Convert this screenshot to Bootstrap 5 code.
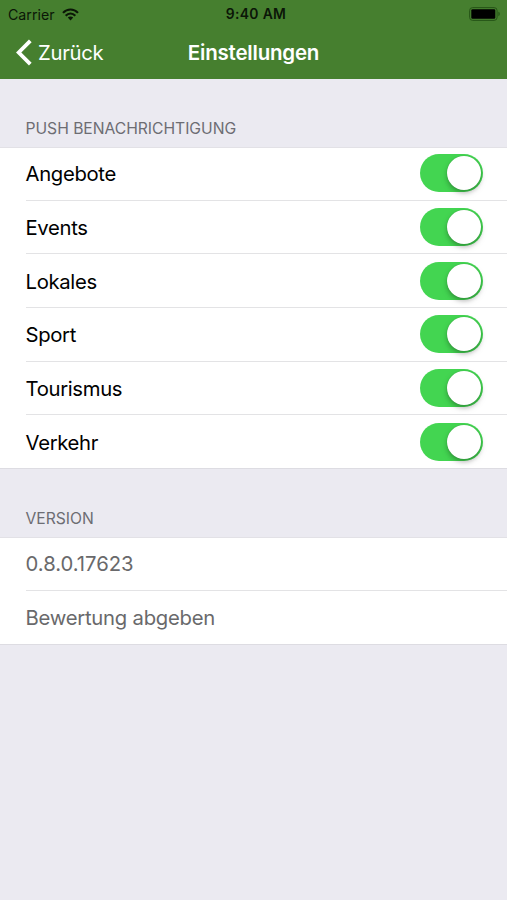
<!DOCTYPE html>
<html lang="de">
<head>
<meta charset="utf-8">
<meta name="viewport" content="width=device-width, initial-scale=1">
<title>Einstellungen</title>
<link href="https://cdn.jsdelivr.net/npm/bootstrap@5.3.0/dist/css/bootstrap.min.css" rel="stylesheet">
<style>
  body { font-family: Inter, "Liberation Sans", sans-serif; background: #ebeaf1; min-height: 100vh; }
  .app-header { background: #467f2f; height: 79px; }
  .status-bar { display: grid; grid-template-columns: 1fr auto 1fr; height: 27px; padding: 0 6px 0 8px; font-size: 14.2px; line-height: 27px; color: #0b1607; }
  .status-left { gap: 7px; }
  .status-time { font-weight: 600; font-size: 13.9px; letter-spacing: .35px; padding: 1px 0 0 3px; }
  .title-bar { display: grid; grid-template-columns: 1fr auto 1fr; height: 52px; padding: 0 15px; color: #fff; }
  .title-bar h1 { font-size: 20.5px; line-height: 51px; font-weight: 600; letter-spacing: -.2px; }
  .back-link { font-size: 20.3px; letter-spacing: -.3px; gap: 6px; height: 50px; }
  .back-link span { padding-top: 2px; }
  .group-title { height: 68px; padding: 40px 25.5px 0; font-size: 15.7px; line-height: 20px; font-weight: 400; color: #6d6d73; letter-spacing: -.04px; }
  .settings { background: #fff; box-shadow: inset 0 1px #e2e1e6, inset 0 -1px #dddce2; }
  .settings .list-group-item { height: 53.7px; margin-left: 25.5px; padding: 0 24px 0 0; border-color: #e3e3e5; font-size: 20.3px; letter-spacing: -.33px; color: #000; background: transparent; }
  .settings label { padding-top: 2.4px; }
  .settings .list-group-item.muted-item { color: #69696b; padding-top: 2px; letter-spacing: -.25px; }
  .version-number { letter-spacing: -.02px; }
  .settings .form-switch { min-height: 0; line-height: 0; }
  .settings .form-check-input { width: 63px; height: 38px; border: 0; background: #43d551; padding: 2px; display: flex; align-items: center; justify-content: flex-end; }
  .settings .form-check-input:checked { background: #43d551; }
  .settings .form-check-input::before { content: ""; width: 34px; height: 34px; border-radius: 50%; background: #fff; box-shadow: 0 3px 4px rgba(0,0,0,.22), 0 3px 8px rgba(0,0,0,.08), 0 0 1px rgba(0,0,0,.2); }
</style>
</head>
<body>
<header class="app-header">
  <div class="status-bar">
    <div class="status-left d-flex align-items-center"><span id="carrier">Carrier</span>
      <svg width="17" height="13" viewBox="0 0 17 13" fill="none" stroke="currentColor" stroke-width="2.1"><path d="M1 4.9C5.2 .4 11.8 .4 16 4.9M3.7 7.7C6.4 4.8 10.6 4.8 13.3 7.7"/><path d="M5.8 9.6C7.3 8 9.7 8 11.2 9.6L8.5 12.4z" fill="currentColor" stroke="none"/></svg>
    </div>
    <span class="status-time">9:40 AM</span>
    <div class="d-flex justify-content-end align-items-center">
      <svg width="32" height="14" viewBox="0 0 32 14"><rect x=".6" y=".6" width="27.5" height="12.8" rx="3" fill="none" stroke="#265417" stroke-width="1"/><rect x="2.3" y="2.3" width="24" height="9.4" rx="1.3" fill="#000"/><path d="M29.4 4.8c1.8.5 1.8 3.9 0 4.4z" fill="#265417"/></svg>
    </div>
  </div>
  <nav class="title-bar">
    <a href="#" class="back-link d-flex align-items-center text-white text-decoration-none">
      <svg width="17" height="27" viewBox="0 0 17 27" fill="none" stroke="#fff" stroke-width="3.8"><path d="M15.3 1.8L3.7 13.5l11.6 11.7"/></svg><span>Zurück</span>
    </a>
    <h1 class="mb-0">Einstellungen</h1>
  </nav>
</header>
<main>
  <h2 class="group-title mb-0">PUSH BENACHRICHTIGUNG</h2>
  <div class="settings">
    <ul class="list-group list-group-flush">
      <li class="list-group-item d-flex align-items-center justify-content-between"><label for="s1">Angebote</label><div class="form-switch p-0"><input class="form-check-input m-0" type="checkbox" role="switch" id="s1" checked></div></li>
      <li class="list-group-item d-flex align-items-center justify-content-between"><label for="s2">Events</label><div class="form-switch p-0"><input class="form-check-input m-0" type="checkbox" role="switch" id="s2" checked></div></li>
      <li class="list-group-item d-flex align-items-center justify-content-between"><label for="s3">Lokales</label><div class="form-switch p-0"><input class="form-check-input m-0" type="checkbox" role="switch" id="s3" checked></div></li>
      <li class="list-group-item d-flex align-items-center justify-content-between"><label for="s4">Sport</label><div class="form-switch p-0"><input class="form-check-input m-0" type="checkbox" role="switch" id="s4" checked></div></li>
      <li class="list-group-item d-flex align-items-center justify-content-between"><label for="s5">Tourismus</label><div class="form-switch p-0"><input class="form-check-input m-0" type="checkbox" role="switch" id="s5" checked></div></li>
      <li class="list-group-item d-flex align-items-center justify-content-between"><label for="s6">Verkehr</label><div class="form-switch p-0"><input class="form-check-input m-0" type="checkbox" role="switch" id="s6" checked></div></li>
    </ul>
  </div>
  <h2 class="group-title mb-0">VERSION</h2>
  <div class="settings">
    <ul class="list-group list-group-flush">
      <li class="list-group-item muted-item d-flex align-items-center"><span class="version-number">0.8.0.17623</span></li>
      <li class="list-group-item muted-item d-flex align-items-center">Bewertung abgeben</li>
    </ul>
  </div>
</main>
<script src="https://cdn.jsdelivr.net/npm/bootstrap@5.3.0/dist/js/bootstrap.bundle.min.js"></script>
</body>
</html>
